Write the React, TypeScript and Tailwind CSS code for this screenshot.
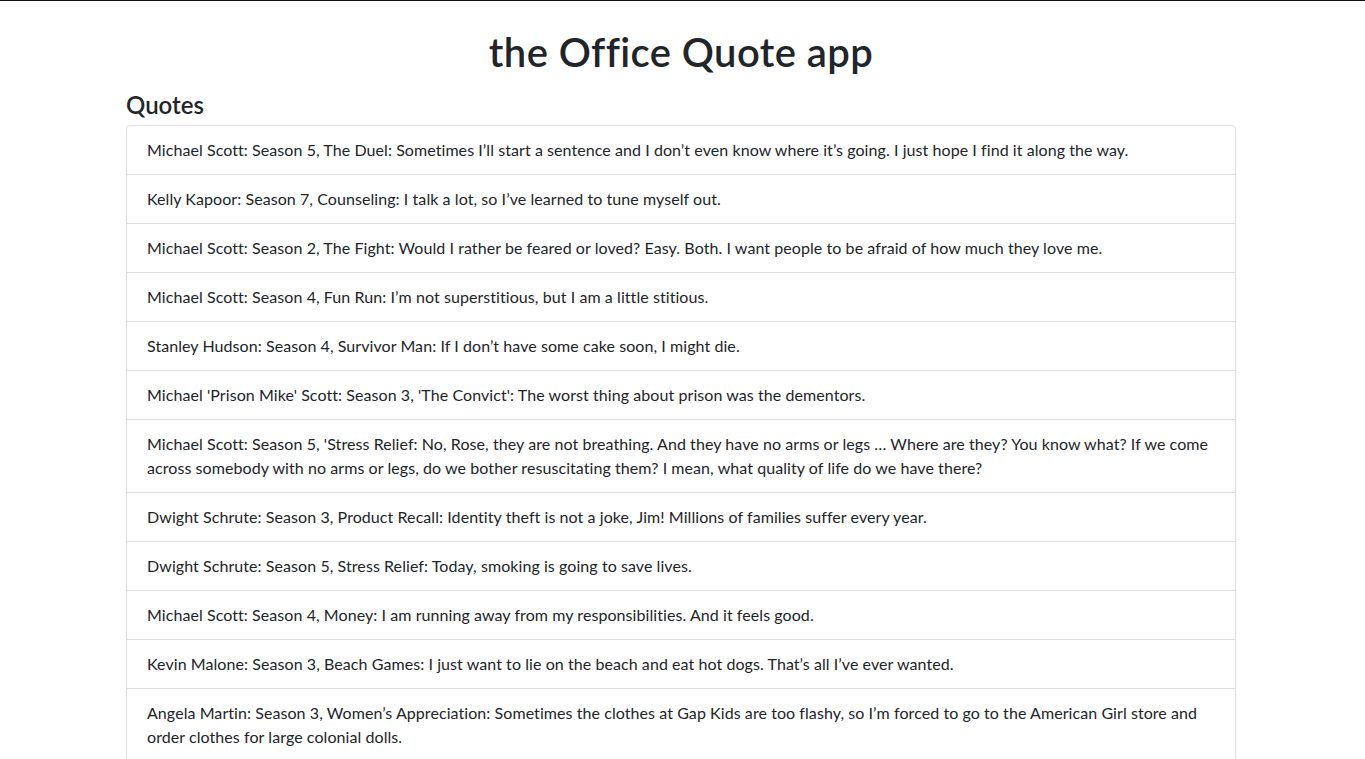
import React from "react";

const quotes = [
  "Michael Scott: Season 5, The Duel: Sometimes I’ll start a sentence and I don’t even know where it’s going. I just hope I find it along the way.",
  "Kelly Kapoor: Season 7, Counseling: I talk a lot, so I’ve learned to tune myself out.",
  "Michael Scott: Season 2, The Fight: Would I rather be feared or loved? Easy. Both. I want people to be afraid of how much they love me.",
  "Michael Scott: Season 4, Fun Run: I’m not superstitious, but I am a little stitious.",
  "Stanley Hudson: Season 4, Survivor Man: If I don’t have some cake soon, I might die.",
  "Michael 'Prison Mike' Scott: Season 3, 'The Convict': The worst thing about prison was the dementors.",
  "Michael Scott: Season 5, 'Stress Relief: No, Rose, they are not breathing. And they have no arms or legs … Where are they? You know what? If we come across somebody with no arms or legs, do we bother resuscitating them? I mean, what quality of life do we have there?",
  "Dwight Schrute: Season 3, Product Recall: Identity theft is not a joke, Jim! Millions of families suffer every year.",
  "Dwight Schrute: Season 5, Stress Relief: Today, smoking is going to save lives.",
  "Michael Scott: Season 4, Money: I am running away from my responsibilities. And it feels good.",
  "Kevin Malone: Season 3, Beach Games: I just want to lie on the beach and eat hot dogs. That’s all I’ve ever wanted.",
  "Angela Martin: Season 3, Women’s Appreciation: Sometimes the clothes at Gap Kids are too flashy, so I’m forced to go to the American Girl store and order clothes for large colonial dolls.",
];

export default function App() {
  return (
    <div
      className="min-h-screen bg-white border-t border-[#111] text-[#212529]"
      style={{ fontFamily: "Lato, 'Noto Sans', sans-serif" }}
    >
      <div className="ml-[126px] w-[1110px]">
        <h1 className="mt-[27px] mb-[14px] text-center text-[40px] leading-[48px] font-semibold tracking-[0.4px]">
          the Office Quote app
        </h1>
        <h4 className="mb-[6px] text-[24px] leading-[29px] font-semibold">Quotes</h4>
        <ul className="border border-[#dfdfdf] rounded-[4px]">
          {quotes.map((q, i) => (
            <li
              key={i}
              className={
                "px-5 py-3 text-[16px] leading-6 tracking-[0.07px] " +
                (i > 0 ? "border-t border-[#dfdfdf]" : "")
              }
            >
              {q}
            </li>
          ))}
        </ul>
      </div>
    </div>
  );
}
